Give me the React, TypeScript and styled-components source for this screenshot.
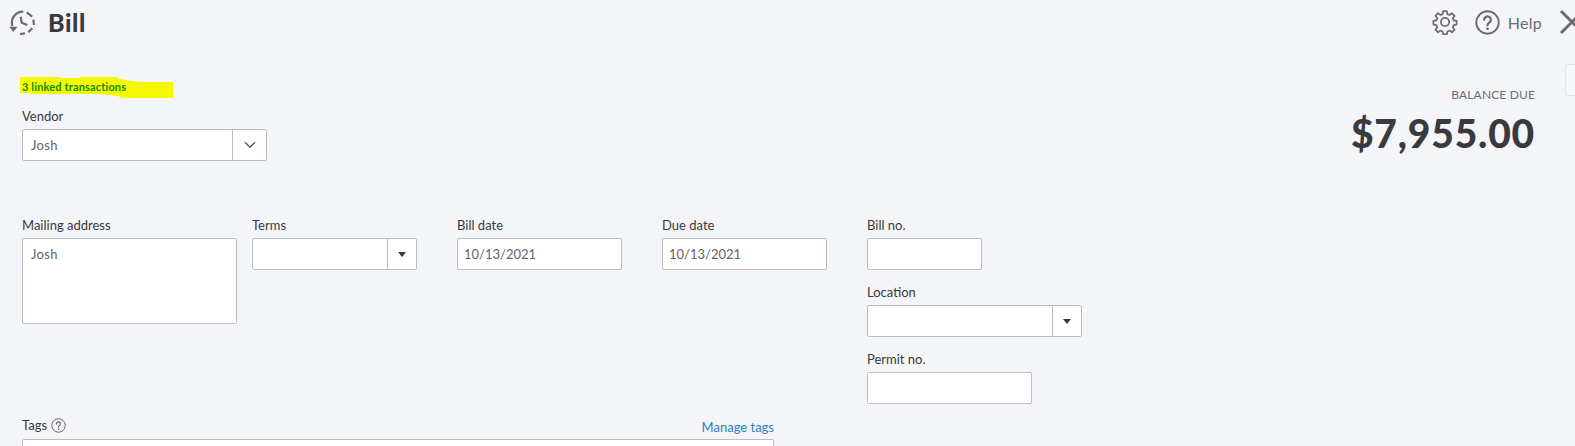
import React from "react";
import styled, { createGlobalStyle } from "styled-components";

const GlobalStyle = createGlobalStyle`
  html, body {
    margin: 0;
    padding: 0;
    background: #f4f5f8;
  }
  * {
    box-sizing: border-box;
  }
`;

const Page = styled.div`
  position: relative;
  width: 1575px;
  height: 446px;
  overflow: hidden;
  background: #f4f5f8;
  color: #393a3d;
  font-family: "Lato", "Liberation Sans", sans-serif;
  font-size: 13px;
`;

const Header = styled.header`
  display: flex;
  align-items: center;
  justify-content: space-between;
  height: 44px;
  padding: 0 0 0 9px;
`;

const TitleGroup = styled.div`
  display: flex;
  align-items: center;
  gap: 12px;
`;

const Title = styled.h1`
  margin: 0;
  font-size: 25px;
  line-height: 30px;
  font-weight: 900;
  letter-spacing: 0.6px;
  color: #393a3d;
`;

const HeaderActions = styled.div`
  display: flex;
  align-items: center;
  gap: 17px;
  margin-right: -10px;
`;

const HelpGroup = styled.div`
  display: flex;
  align-items: center;
  gap: 8px;
`;

const HelpText = styled.span`
  font-size: 16px;
  letter-spacing: 0.3px;
  color: #6b6c72;
`;

const Content = styled.main`
  display: flex;
  justify-content: space-between;
  padding: 33px 40px 0 22px;
`;

const LinkedRow = styled.div`
  position: relative;
  height: 20px;
  line-height: 18px;
  margin-bottom: 12px;
`;

const Highlight = styled.svg`
  position: absolute;
  left: -2px;
  top: 0;
`;

const LinkedText = styled.span`
  position: relative;
  font-size: 11px;
  font-weight: 700;
  letter-spacing: 0.15px;
  color: #0f8a00;
`;

const Balance = styled.div`
  text-align: right;
  padding-top: 10px;
`;

const BalanceLabel = styled.div`
  font-size: 12px;
  line-height: 16px;
  letter-spacing: 0.15px;
  color: #6b6c72;
`;

const BalanceAmount = styled.div`
  margin-top: 8px;
  font-size: 39px;
  line-height: 44px;
  font-weight: 900;
  letter-spacing: 0.8px;
  color: #393a3d;
`;

const Label = styled.label`
  display: block;
  height: 20px;
  line-height: 14px;
  font-size: 13px;
  color: #393a3d;
`;

const Box = styled.div<{ $width: number; $height?: number }>`
  display: flex;
  width: ${(p) => p.$width}px;
  height: ${(p) => p.$height ?? 32}px;
  background: #fff;
  border: 1px solid #babec5;
  border-radius: 2px;
`;

const BoxValue = styled.div`
  flex: 1;
  padding: 0 8px;
  line-height: 30px;
  font-size: 13px;
  letter-spacing: 0.3px;
  color: #636469;
`;

const DateValue = styled(BoxValue)`
  padding: 0 6px;
  letter-spacing: 0;
`;

const BoxButton = styled.div<{ $width: number }>`
  display: flex;
  align-items: center;
  justify-content: center;
  width: ${(p) => p.$width}px;
  border-left: 1px solid #babec5;
`;

const Caret = styled.div`
  width: 0;
  height: 0;
  border-left: 4px solid transparent;
  border-right: 4px solid transparent;
  border-top: 5px solid #393a3d;
`;

const Fields = styled.div`
  display: flex;
  margin-top: 57px;
  padding-left: 22px;
`;

const FieldColumn = styled.div<{ $left: number }>`
  display: flex;
  flex-direction: column;
  gap: 15px;
  margin-left: ${(p) => p.$left}px;
`;

const TagsSection = styled.div`
  margin: 13px 0 0 22px;
`;

const TagsHead = styled.div`
  display: flex;
  align-items: flex-end;
  justify-content: space-between;
  width: 752px;
  height: 22px;
`;

const TagsLabel = styled.div`
  display: flex;
  align-items: center;
  align-self: flex-start;
  gap: 4px;
  line-height: 16px;
  height: 16px;
`;

const ManageLink = styled.a`
  font-size: 13px;
  line-height: 16px;
  padding-bottom: 4px;
  color: #2a82c0;
`;

const SideTab = styled.div`
  position: absolute;
  right: -10px;
  top: 64px;
  width: 20px;
  height: 32px;
  border: 1px solid #e3e5e9;
  border-radius: 2px;
  background: #f6f7f9;
`;

const HistoryIcon = () => (
  <svg width="27" height="26" viewBox="0 0 27 26" fill="none" stroke="#6b6c72" strokeWidth="2.2">
    <path d="M3.4 17A11 11 0 0 1 14.3 2.7" />
    <path d="M17.7 3.4L23.2 7.6M24.4 10.6L25 16M23.3 19.3L19.3 23.3M16 24.4L11 25" />
    <path d="M11.7 7.7l1 6 5.6 2.4" strokeWidth="2.2" />
    <path d="M0.3 17.8h8.2L4.4 23z" fill="#6b6c72" stroke="none" />
  </svg>
);

const GearIcon = () => (
  <svg width="26" height="26" viewBox="0 0 24 24" fill="none" stroke="#6b6c72" strokeWidth="1.6" strokeLinejoin="round">
    <path d="M10.3 2h3.4l.5 2.7 1.9.8 2.3-1.6 2.4 2.4-1.6 2.3.8 1.9 2.7.5v3.4l-2.7.5-.8 1.9 1.6 2.3-2.4 2.4-2.3-1.6-1.9.8-.5 2.7h-3.4l-.5-2.7-1.9-.8-2.3 1.6-2.4-2.4 1.6-2.3-.8-1.9-2.7-.5v-3.4l2.7-.5.8-1.9-1.6-2.3 2.4-2.4 2.3 1.6 1.9-.8z" />
    <circle cx="12" cy="12" r="3.8" />
  </svg>
);

const HelpIcon = ({ size, weight }: { size: number; weight: number }) => (
  <svg width={size} height={size} viewBox="0 0 24 24" fill="none" stroke="#6b6c72" strokeWidth={weight}>
    <circle cx="12" cy="12" r="10.8" />
    <path d="M8.8 9.4a3.2 3.2 0 1 1 4.9 2.7c-1.1.7-1.7 1.3-1.7 2.6" strokeWidth={weight + 0.4} strokeLinecap="round" />
    <circle cx="12" cy="18" r="1.3" fill="#6b6c72" stroke="none" />
  </svg>
);

const CloseIcon = () => (
  <svg width="26" height="26" viewBox="0 0 26 26" fill="none" stroke="#6b6c72" strokeWidth="3">
    <path d="M2 2l22 22M24 2L2 24" />
  </svg>
);

const ChevronIcon = () => (
  <svg width="12" height="8" viewBox="0 0 12 8" fill="none" stroke="#55565b" strokeWidth="1.4">
    <path d="M1 1.2l5 5 5-5" />
  </svg>
);

export default function App() {
  return (
    <Page>
      <GlobalStyle />
      <Header>
        <TitleGroup>
          <HistoryIcon />
          <Title>Bill</Title>
        </TitleGroup>
        <HeaderActions>
          <GearIcon />
          <HelpGroup>
            <HelpIcon size={25} weight={1.8} />
            <HelpText>Help</HelpText>
          </HelpGroup>
          <CloseIcon />
        </HeaderActions>
      </Header>
      <SideTab />
      <Content>
        <div>
          <LinkedRow>
            <Highlight width="154" height="22" viewBox="0 0 154 22">
              <path
                d="M0 0H40V1H60V0H96L100 2L107 3L120 5H153V21H102L98 19L80 17H10V16H0Z"
                fill="#f5fa00"
              />
            </Highlight>
            <LinkedText>3 linked transactions</LinkedText>
          </LinkedRow>
          <Label>Vendor</Label>
          <Box $width={245}>
            <BoxValue>Josh</BoxValue>
            <BoxButton $width={34}>
              <ChevronIcon />
            </BoxButton>
          </Box>
        </div>
        <Balance>
          <BalanceLabel>BALANCE DUE</BalanceLabel>
          <BalanceAmount>$7,955.00</BalanceAmount>
        </Balance>
      </Content>
      <Fields>
        <div>
          <Label>Mailing address</Label>
          <Box $width={215} $height={86}>
            <BoxValue>Josh</BoxValue>
          </Box>
        </div>
        <FieldColumn $left={15}>
          <div>
            <Label>Terms</Label>
            <Box $width={165}>
              <BoxValue />
              <BoxButton $width={29}>
                <Caret />
              </BoxButton>
            </Box>
          </div>
        </FieldColumn>
        <FieldColumn $left={40}>
          <div>
            <Label>Bill date</Label>
            <Box $width={165}>
              <DateValue>10/13/2021</DateValue>
            </Box>
          </div>
        </FieldColumn>
        <FieldColumn $left={40}>
          <div>
            <Label>Due date</Label>
            <Box $width={165}>
              <DateValue>10/13/2021</DateValue>
            </Box>
          </div>
        </FieldColumn>
        <FieldColumn $left={40}>
          <div>
            <Label>Bill no.</Label>
            <Box $width={115} />
          </div>
          <div>
            <Label>Location</Label>
            <Box $width={215}>
              <BoxValue />
              <BoxButton $width={29}>
                <Caret />
              </BoxButton>
            </Box>
          </div>
          <div>
            <Label>Permit no.</Label>
            <Box $width={165} />
          </div>
        </FieldColumn>
      </Fields>
      <TagsSection>
        <TagsHead>
          <TagsLabel>
            Tags
            <HelpIcon size={15} weight={1.6} />
          </TagsLabel>
          <ManageLink>Manage tags</ManageLink>
        </TagsHead>
        <Box $width={752} $height={40} />
      </TagsSection>
    </Page>
  );
}
